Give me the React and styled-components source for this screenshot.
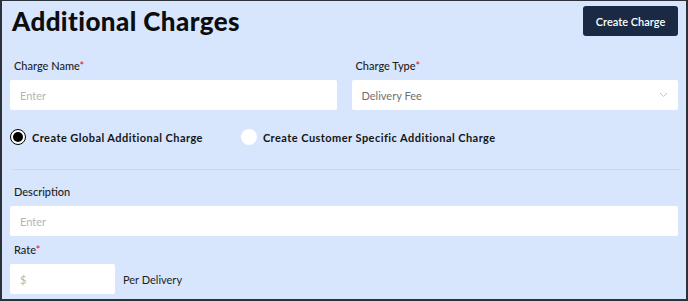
import React from "react";
import styled, { createGlobalStyle } from "styled-components";

const Global = createGlobalStyle`
  html, body { margin: 0; padding: 0; background: #d7e6fd; }
  body { font-family: "Lato", "Open Sans", sans-serif; }
  * { box-sizing: border-box; }
`;

const Frame = styled.div`
  width: 688px;
  height: 301px;
  border: 2px solid #2c323a;
  border-top-width: 1px;
  background: #d7e6fd;
  overflow: hidden;
`;

const Page = styled.div`
  padding: 5px 8px 0 8px;
  display: flex;
  flex-direction: column;
`;

const Header = styled.div`
  display: flex;
  justify-content: space-between;
  align-items: center;
  height: 30px;
`;

const Title = styled.h1`
  margin: 0 0 0 2px;
  font-family: "Lato", sans-serif;
  font-weight: 900;
  font-size: 26px;
  color: #0d0d0d;
  letter-spacing: 0.4px;
`;

const PrimaryButton = styled.button`
  height: 30px;
  width: 95px;
  border: none;
  border-radius: 3px;
  background: #1b2a44;
  color: #fff;
  font-family: "Lato", sans-serif;
  font-size: 11px;
  font-weight: 600;
`;

const Grid = styled.div`
  display: grid;
  grid-template-columns: 1fr 1fr;
  column-gap: 15px;
  margin-top: 22px;
`;

const Field = styled.div`
  display: flex;
  flex-direction: column;
  gap: 6px;
`;

const Label = styled.label`
  font-size: 11px;
  line-height: 16px;
  color: #1e1e1e;
  padding-left: 4px;
  font-weight: 500;
`;

const Req = styled.span`
  color: #e0202a;
`;

const Input = styled.div`
  height: 30px;
  background: #fff;
  border-radius: 2px;
  display: flex;
  align-items: center;
  justify-content: space-between;
  padding: 0 10px;
  font-size: 11px;
  color: ${(p) => (p.$value ? "#707070" : "#b5b5b5")};
  width: ${(p) => p.$width || "auto"};
`;

const RadioRow = styled.div`
  display: flex;
  align-items: center;
  gap: 38px;
  margin-top: 19px;
  height: 16px;
`;

const RadioOption = styled.div`
  display: flex;
  align-items: center;
  gap: 6px;
  font-size: 11px;
  font-weight: 700;
  letter-spacing: 0.45px;
  color: #151515;
`;

const RadioCircle = styled.span`
  width: 16px;
  height: 16px;
  border-radius: 50%;
  background: #fff;
  border: ${(p) => (p.$checked ? "1.5px solid #000" : "none")};
  display: flex;
  align-items: center;
  justify-content: center;
  &::after {
    content: "";
    display: ${(p) => (p.$checked ? "block" : "none")};
    width: 10px;
    height: 10px;
    border-radius: 50%;
    background: #000;
  }
`;

const Divider = styled.hr`
  border: none;
  border-top: 1px solid #c9d8ee;
  margin: 24px 0 14px 2px;
  width: 668px;
`;

const Stack = styled.div`
  display: flex;
  flex-direction: column;
  gap: 6px;
`;

const RateRow = styled.div`
  display: flex;
  align-items: center;
  gap: 8px;
`;

const Unit = styled.span`
  font-size: 11px;
  color: #1e1e1e;
`;

const Chevron = () => (
  <svg width="9" height="6" viewBox="0 0 9 6" fill="none">
    <path d="M1 1l3.5 3.5L8 1" stroke="#c4c4c4" strokeWidth="1" />
  </svg>
);

export default function App() {
  return (
    <>
      <Global />
      <Frame>
        <Page>
          <Header>
            <Title>Additional Charges</Title>
            <PrimaryButton>Create Charge</PrimaryButton>
          </Header>
          <Grid>
            <Field>
              <Label>
                Charge Name<Req>*</Req>
              </Label>
              <Input>Enter</Input>
            </Field>
            <Field>
              <Label>
                Charge Type<Req>*</Req>
              </Label>
              <Input $value>
                Delivery Fee
                <Chevron />
              </Input>
            </Field>
          </Grid>
          <RadioRow>
            <RadioOption>
              <RadioCircle $checked />
              Create Global Additional Charge
            </RadioOption>
            <RadioOption>
              <RadioCircle />
              Create Customer Specific Additional Charge
            </RadioOption>
          </RadioRow>
          <Divider />
          <Stack>
            <Label>Description</Label>
            <Input>Enter</Input>
            <Label>
              Rate<Req>*</Req>
            </Label>
            <RateRow>
              <Input $width="105px">$</Input>
              <Unit>Per Delivery</Unit>
            </RateRow>
          </Stack>
        </Page>
      </Frame>
    </>
  );
}
